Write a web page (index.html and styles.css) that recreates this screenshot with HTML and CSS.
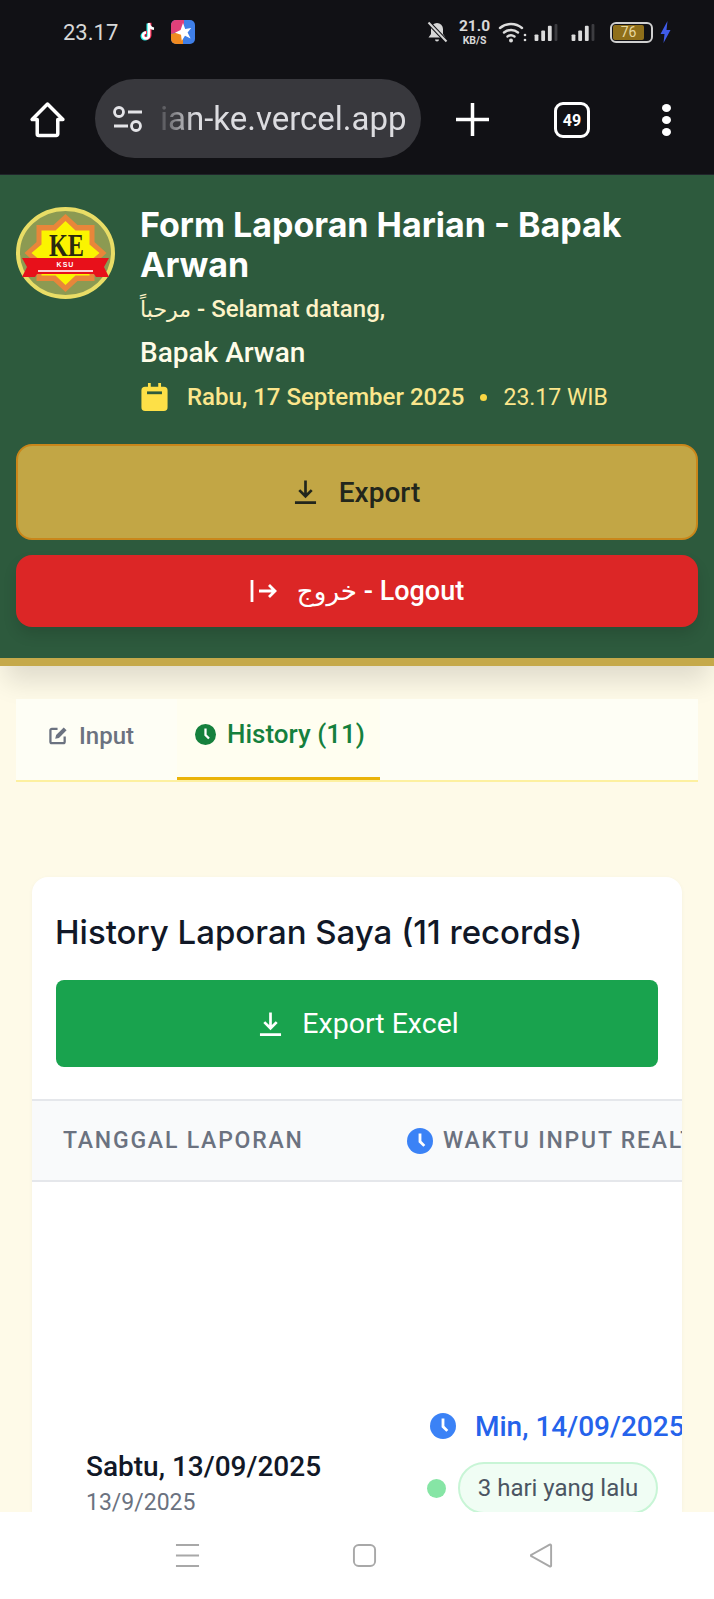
FILE: index.html
```html
<!DOCTYPE html>
<html lang="id">
<head>
<meta charset="utf-8">
<title>Form Laporan Harian</title>
<link rel="stylesheet" href="styles.css">
</head>
<body>
<div class="screen">
  <div class="statusbar">
    <div class="status-left">
      <span class="clock">23.17</span>
      <svg class="ic-tiktok" viewBox="0 0 24 24"><path d="M13 3v12.500a3 3 0 1 1-3-3" fill="none" stroke="#25f4ee" stroke-width="3" transform="translate(-1 .6)"/><path d="M13 3v12.500a3 3 0 1 1-3-3" fill="none" stroke="#fe2c55" stroke-width="3" transform="translate(1 -.2)"/><path d="M13 3v12.500a3 3 0 1 1-3-3M13 4c.5 3 2.500 4.500 5 4.800" fill="none" stroke="#fff" stroke-width="2.600"/></svg>
      <svg class="ic-app" viewBox="0 0 24 24"><rect width="24" height="24" rx="5" fill="#3f7fe8"/><path d="M5 0h8v10L0 14V5a5 5 0 0 1 5-5z" fill="#e0407a"/><path d="M0 14l12-3v13H5a5 5 0 0 1-5-5z" fill="#f08a20"/><path d="M12 3l2.200 6 6-1-3.600 4.500 3 6-5.600-2.800-3.200 5-.8-6-6-2 5.600-2.600z" fill="#fff"/></svg>
    </div>
    <div class="status-right">
      <svg class="ic-bell" viewBox="0 0 24 24"><path d="M12 3a6 6 0 0 0-6 6v5l-2.500 3.500h17L18 14V9a6 6 0 0 0-6-6zM10 19.500a2 2 0 0 0 4 0z" fill="#d6d6d6"/><path d="M3.500 2.500l18 19" stroke="#111115" stroke-width="4"/><path d="M3.500 2.500l18 19" stroke="#d6d6d6" stroke-width="2"/></svg>
      <span class="netspeed"><span class="net-num">21.0</span><span class="net-unit">KB/S</span></span>
      <svg class="ic-wifi" viewBox="0 0 30 24"><g fill="none" stroke="#dcdcdc" stroke-width="2.400" stroke-linecap="round"><path d="M2 8a17 17 0 0 1 22 0"/><path d="M6 12.500a11 11 0 0 1 14 0"/><path d="M9.500 16.500a6 6 0 0 1 7 0"/></g><circle cx="13" cy="20.500" r="2" fill="#dcdcdc"/><circle cx="27" cy="15" r="1.300" fill="#dcdcdc"/><circle cx="27" cy="20" r="1.300" fill="#dcdcdc"/></svg>
      <svg class="ic-signal" viewBox="0 0 26 20"><g fill="#dcdcdc"><rect x="1" y="12" width="4" height="7" rx="1"/><rect x="8" y="8" width="4" height="11" rx="1"/><rect x="15" y="3" width="4" height="16" rx="1"/></g><rect x="22" y="1" width="3" height="18" rx="1" fill="#3c3c40"/></svg>
      <svg class="ic-signal ic-signal-b" viewBox="0 0 26 20"><g fill="#dcdcdc"><rect x="1" y="12" width="4" height="7" rx="1"/><rect x="8" y="8" width="4" height="11" rx="1"/><rect x="15" y="3" width="4" height="16" rx="1"/></g><rect x="22" y="1" width="3" height="18" rx="1" fill="#3c3c40"/></svg>
      <span class="battery"><span class="battery-fill">76</span></span>
      <svg class="ic-bolt" viewBox="0 0 12 24"><path d="M8 1L1 14h4l-1 9 7-13H7z" fill="#3f5be8"/></svg>
    </div>
  </div>

  <div class="browserbar">
    <svg class="ic-home" viewBox="0 0 36 36"><path d="M18 3L3 18h5v14a1.500 1.500 0 0 0 1.500 1.500h17A1.500 1.500 0 0 0 28 32V18h5z" fill="none" stroke="#fff" stroke-width="3.400" stroke-linejoin="round"/></svg>
    <div class="omnibox">
      <svg class="ic-tune" viewBox="0 0 32 26"><g fill="none" stroke="#e4e4e8" stroke-width="2.800"><circle cx="7" cy="6" r="4.500"/><path d="M16 6h14M2 20h14"/><circle cx="24" cy="20" r="4.500"/></g></svg>
      <span class="url">ian-ke.vercel.app</span>
    </div>
    <svg class="ic-plus" viewBox="0 0 32 32"><path d="M16 0v32M0 16h32" stroke="#fff" stroke-width="3.400"/></svg>
    <span class="tabcount">49</span>
    <span class="kebab"><i></i><i></i><i></i></span>
  </div>

  <main class="page">
    <header class="hero">
      <div class="hero-top">
        <svg class="logo" viewBox="0 0 99 92" preserveAspectRatio="none">
          <ellipse cx="49.500" cy="46" rx="47.500" ry="44" fill="#8c9a52" stroke="#e9dd66" stroke-width="4"/>
          <path d="M49.500 7l12 11h17v17l12 11-12 11v17h-17l-12 11-12-11h-17V57l-12-11 12-11V18h17z" fill="#e8863a"/>
          <path d="M49.500 14l10 9.500h14v14l10 8.500-10 8.500v14h-14l-10 9.500-10-9.500h-14v-14l-10-8.500 10-8.500v-14h14z" fill="#fbf400"/>
          <text x="33" y="49" class="logo-ke" textLength="35" lengthAdjust="spacingAndGlyphs">KE</text>
          <path d="M6 51h87l-5 9 5 10H80l-2 -3H21l-2 3H6l5-10z" fill="#e8101a"/>
          <text x="49.500" y="59.500" class="logo-ksu">KSU</text>
          <rect x="22" y="63" width="55" height="2" fill="#fff" opacity=".8"/>
        </svg>
        <div class="hero-text">
          <h1 class="hero-title">Form Laporan Harian - Bapak Arwan</h1>
          <p class="hero-greet"><span class="ar">مرحباً</span> - Selamat datang,</p>
          <p class="hero-name">Bapak Arwan</p>
          <p class="hero-date">
            <svg class="ic-cal" viewBox="0 0 28 30"><path d="M7 0h3v4h8V0h3v4h3a4 4 0 0 1 4 4v18a4 4 0 0 1-4 4H4a4 4 0 0 1-4-4V8a4 4 0 0 1 4-4h3z" fill="#fde047"/><rect x="6" y="9" width="16" height="3" fill="#2d5a3d"/></svg>
            <span class="date-main">Rabu, 17 September 2025</span>
            <span class="date-dot"></span>
            <span class="date-time">23.17 WIB</span>
          </p>
        </div>
      </div>
      <button class="btn btn-export">
        <svg class="ic-dl" viewBox="0 0 24 26"><path d="M12 1v16M5.500 11l6.500 6.500 6.500-6.500M1 24h22" fill="none" stroke="currentColor" stroke-width="2.800"/></svg>
        <span>Export</span>
      </button>
      <button class="btn btn-logout">
        <svg class="ic-out" viewBox="0 0 28 24"><path d="M2 1v22M9 12h16M19 6l6 6-6 6" fill="none" stroke="currentColor" stroke-width="2.800"/></svg>
        <span><span class="ar ar-out">خروج</span> - Logout</span>
      </button>
    </header>

    <nav class="tabs">
      <a class="tab">
        <svg class="ic-edit" viewBox="0 0 20 20"><path d="M9 3H3a1.500 1.500 0 0 0-1.500 1.500v12A1.500 1.500 0 0 0 3 18h12a1.500 1.500 0 0 0 1.500-1.500V11" fill="none" stroke="currentColor" stroke-width="2.400"/><path d="M6.500 13.500l1-4L15.500 1.500l3 3-8 8z" fill="currentColor"/></svg>
        Input
      </a>
      <a class="tab tab-active">
        <svg class="ic-clock" viewBox="0 0 24 24"><circle cx="12" cy="12" r="12" fill="currentColor"/><path d="M12 5v7.500l4 4" fill="none" stroke="#fff" stroke-width="2.600"/></svg>
        History (11)
      </a>
    </nav>

    <section class="card">
      <h2 class="card-title">History Laporan Saya (11 records)</h2>
      <button class="btn-excel">
        <svg class="ic-dl" viewBox="0 0 24 26"><path d="M12 1v16M5.500 11l6.500 6.500 6.500-6.500M1 24h22" fill="none" stroke="currentColor" stroke-width="2.800"/></svg>
        <span>Export Excel</span>
      </button>
      <div class="table-wrap">
        <div class="thead">
          <div class="col-date">TANGGAL LAPORAN</div>
          <div class="col-time">
            <svg class="ic-clock-sm" viewBox="0 0 24 24"><circle cx="12" cy="12" r="12" fill="#3b82f6"/><path d="M12 5v7.500l4 4" fill="none" stroke="#fff" stroke-width="2.600"/></svg>
            WAKTU INPUT REALTIME
          </div>
        </div>
        <div class="trow">
          <div class="cell-date">
            <div class="date-strong">Sabtu, 13/09/2025</div>
            <div class="date-sub">13/9/2025</div>
          </div>
          <div class="cell-time">
            <div class="time-line">
              <svg class="ic-clock-sm" viewBox="0 0 24 24"><circle cx="12" cy="12" r="12" fill="#3b82f6"/><path d="M12 5v7.500l4 4" fill="none" stroke="#fff" stroke-width="2.600"/></svg>
              <span class="time-val">Min, 14/09/2025</span>
            </div>
            <div class="ago-line">
              <span class="ago-dot"></span>
              <span class="ago-pill">3 hari yang lalu</span>
            </div>
          </div>
        </div>
      </div>
    </section>
  </main>

  <footer class="navbar">
    <svg class="ic-nav" viewBox="0 0 26 26"><path d="M1 2h24M1 13h24M1 24h24" stroke="#a8a8a8" stroke-width="2"/></svg>
    <svg class="ic-nav" viewBox="0 0 26 26"><rect x="2" y="2" width="22" height="22" rx="5" fill="none" stroke="#a8a8a8" stroke-width="2"/></svg>
    <svg class="ic-nav" viewBox="0 0 26 26"><path d="M23 2.500v21a1 1 0 0 1-1.500.8L3 14a1 1 0 0 1 0-2L21.500 1.700a1 1 0 0 1 1.500.8z" fill="none" stroke="#a8a8a8" stroke-width="2"/></svg>
  </footer>
</div>
</body>
</html>
```

FILE: styles.css
```css
* { box-sizing: border-box; margin: 0; padding: 0; }
html, body { height: 100%; }
body {
  font-family: Roboto, "DejaVu Sans", sans-serif;
  background: #fefae8;
  overflow: hidden;
}
.screen {
  width: 714px;
  height: 1599px;
  display: flex;
  flex-direction: column;
  overflow: hidden;
}

/* status bar */
.statusbar {
  height: 72px;
  flex: none;
  background: #111115;
  display: flex;
  justify-content: space-between;
  align-items: flex-start;
  padding: 16px 42px 0 63px;
  color: #d8d8d8;
}
.status-left, .status-right { display: flex; align-items: center; height: 32px; }
.clock { font-size: 22px; width: 73px; }
.ic-tiktok { width: 24px; height: 24px; }
.ic-app { width: 24px; height: 24px; margin-left: 11px; }
.ic-bell { width: 24px; height: 24px; flex: none; }
.netspeed { display: flex; flex-direction: column; align-items: center; margin-left: 10px; width: 31px; font-weight: 700; }
.net-num { font-size: 15.500px; line-height: 17px; }
.net-unit { font-size: 10.500px; line-height: 12px; }
.ic-wifi { width: 30px; height: 24px; margin-left: 8px; flex: none; }
.ic-signal { width: 26px; height: 19px; margin-left: 5px; flex: none; }
.ic-signal-b { margin-left: 10px; width: 28px; }
.battery {
  width: 43px; height: 21px; margin-left: 13px; flex: none;
  border: 2px solid #d0d0d0; border-radius: 6px; padding: 1px;
  display: flex;
}
.battery-fill {
  width: 31px; background: #8f6f1a; border-radius: 2px;
  font-size: 14px; line-height: 15px; text-align: center; color: #e8d8a0;
}
.ic-bolt { width: 13px; height: 24px; margin-left: 6px; flex: none; }

/* browser bar */
.browserbar {
  height: 103px;
  flex: none;
  background: #111115;
  border-bottom: 1px solid #20242a;
  display: flex;
  align-items: flex-start;
  padding: 7px 0 0 29px;
}
.ic-home { width: 37px; height: 37px; margin-top: 22px; flex: none; }
.omnibox {
  width: 326px; height: 79px; margin-left: 29px; flex: none;
  background: #38383d; border-radius: 40px;
  display: flex; align-items: center;
  padding-left: 17px;
  overflow: hidden;
}
.ic-tune { width: 32px; height: 26px; flex: none; }
.url {
  font-size: 33px; color: #dcdce0; margin-left: 16px; white-space: nowrap;
  -webkit-mask-image: linear-gradient(90deg, rgba(0,0,0,.15), #000 36px);
  mask-image: linear-gradient(90deg, rgba(0,0,0,.15), #000 36px);
}
.ic-plus { width: 33px; height: 33px; margin: 24px 0 0 35px; flex: none; }
.tabcount {
  width: 36px; height: 36px; margin: 23px 0 0 65px; flex: none;
  border: 3px solid #fff; border-radius: 9px;
  color: #fff; font-size: 16px; font-weight: 700;
  display: flex; align-items: center; justify-content: center;
}
.kebab { display: flex; flex-direction: column; gap: 4px; margin: 25px 0 0 72px; }
.kebab i { width: 9px; height: 8px; border-radius: 50%; background: #fff; display: block; }

/* page */
.page { flex: 1; min-height: 0; overflow: hidden; background: #fefae8; display: flex; flex-direction: column; }

.hero {
  flex: none;
  height: 491px;
  background: #2d5a3d;
  border-bottom: 8px solid #c5a94a;
  padding: 30px 16px 0;
  box-shadow: 0 20px 25px -5px rgba(0,0,0,.12);
}
.hero-top { display: flex; gap: 25px; height: 239px; }
.logo { width: 99px; height: 92px; flex: none; margin-top: 2px; }
.logo-ke { font-family: "Liberation Serif", serif; font-weight: 700; font-size: 32px; fill: #2a2a10; }
.logo-ksu { font-family: "Liberation Sans", sans-serif; font-weight: 700; font-size: 7px; text-anchor: middle; fill: #fff; letter-spacing: 1px; }
.hero-text { flex: 1; min-width: 0; }
.hero-title {
  font-family: Inter, sans-serif; font-weight: 700;
  font-size: 34px; line-height: 40px; color: #fff;
}
.hero-greet { font-size: 24px; font-weight: 500; color: #fef3c7; line-height: 30px; margin-top: 9px; }
.ar { font-family: "DejaVu Sans", sans-serif; font-weight: 400; font-size: .92em; }
.ar-out { font-size: .97em; }
.hero-name { font-size: 28px; font-weight: 500; color: #fefce8; line-height: 34px; margin-top: 11px; }
.hero-date { display: flex; align-items: center; margin-top: 12px; height: 30px; color: #fbe68c; font-size: 24px; margin-left: 1px; }
.ic-cal { width: 27px; height: 28px; flex: none; }
.date-main { margin-left: 19px; font-weight: 500; }
.date-dot { width: 7px; height: 7px; border-radius: 50%; background: #fad643; margin: 0 16px; }
.date-time { font-weight: 400; font-size: 23px; }

.btn {
  width: 100%; display: flex; align-items: center; justify-content: center;
  font-family: Roboto, "DejaVu Sans", sans-serif; font-size: 28px; font-weight: 500; border: 0;
}
.btn-export {
  height: 96px; background: #c2a645; color: #22261c;
  border: 2px solid #c9861a; border-radius: 16px; gap: 22px;
}
.btn-logout {
  height: 72px; margin-top: 15px; background: #dc2626; color: #fff;
  border-radius: 16px; gap: 19px; font-size: 27px;
  box-shadow: 0 8px 14px rgba(0,0,0,.12);
}
.ic-dl { width: 23px; height: 26px; flex: none; }
.ic-out { width: 28px; height: 24px; flex: none; }

/* tabs */
.tabs {
  flex: none; display: flex; margin: 33px 16px 0; height: 83px;
  background: #fefef5; border-bottom: 2px solid #fdf0a0;
}
.tab {
  height: 81px; display: flex; align-items: center;
  font-size: 24px; font-weight: 500; color: #6b7280;
  padding: 0 0 8px 33px; width: 161px; gap: 11px;
}
.tab-active {
  width: 203px; padding-left: 18px; color: #15803d; background: #fffef0;
  border-bottom: 3px solid #eab308; font-size: 26px;
}
.ic-edit { width: 19px; height: 19px; flex: none; }
.ic-clock { width: 21px; height: 21px; flex: none; }

/* card */
.card {
  flex: 1; min-height: 0; margin: 95px 32px 0; background: #fff;
  border-radius: 16px 16px 0 0; padding-top: 30px; overflow: hidden;
  box-shadow: 0 1px 4px rgba(0,0,0,.04);
}
.card-title {
  font-family: Inter, sans-serif; font-weight: 500; font-size: 33px; line-height: 50px;
  color: #111827; padding: 0 24px 0 23px; white-space: nowrap;
}
.btn-excel {
  display: flex; align-items: center; justify-content: center; gap: 20px;
  width: 602px; height: 87px; margin: 23px 24px 0; padding-left: 4px; border: 0; border-radius: 8px;
  background: #19a34e; color: #fff;
  font-family: Roboto, sans-serif; font-size: 28.500px;
}
.table-wrap { margin-top: 32px; overflow: hidden; }
.thead {
  height: 83px; background: #f9fafb;
  border-top: 2px solid #e5e7eb; border-bottom: 2px solid #e5e7eb;
  display: flex; align-items: center; white-space: nowrap;
  font-size: 23px; font-weight: 500; color: #6b7280; letter-spacing: 1.800px;
}
.col-date { width: 375px; padding-left: 31px; flex: none; }
.col-time { display: flex; align-items: center; gap: 10px; flex: none; }
.ic-clock-sm { width: 26px; height: 26px; flex: none; }
.trow { display: flex; height: 400px; padding-top: 224px; white-space: nowrap; }
.cell-date { width: 395px; flex: none; padding: 42px 0 0 54px; }
.date-strong { font-size: 28px; font-weight: 500; color: #111827; line-height: 38px; }
.date-sub { font-size: 23px; color: #6b7280; line-height: 34px; }
.cell-time { flex: none; }
.time-line { display: flex; align-items: center; gap: 19px; height: 40px; margin-left: 3px; }
.time-val { font-size: 28px; font-weight: 500; color: #2563eb; }
.ago-line { display: flex; align-items: center; gap: 12px; margin-top: 16px; }
.ago-dot { width: 19px; height: 19px; border-radius: 50%; background: #86e5a5; flex: none; }
.ago-pill {
  width: 200px; height: 52px; border: 2px solid #c8f5d6; border-radius: 26px;
  background: #f0fdf4; color: #4b5563; font-size: 24px;
  display: flex; align-items: center; justify-content: center;
}

/* nav */
.navbar {
  height: 87px; flex: none; background: #fff;
  display: flex; align-items: flex-start; justify-content: center; gap: 152px;
  padding: 31px 0 0 15px; position: relative; z-index: 1;
}
.ic-nav { width: 25px; height: 25px; }
```
